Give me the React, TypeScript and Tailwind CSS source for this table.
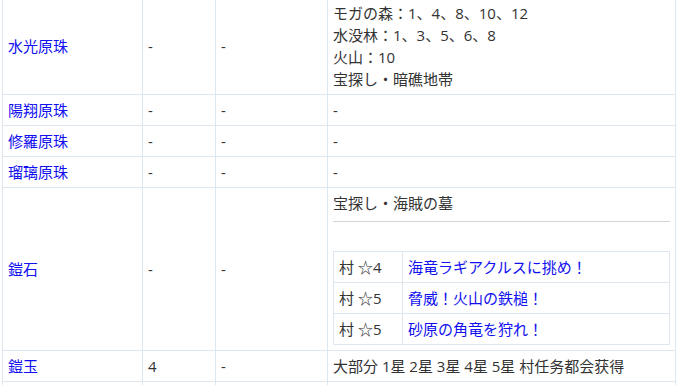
const LINK = "text-[#1010f0]";

type Quest = { rank: string; name: string };

const QUESTS: Quest[] = [
  { rank: "村 ☆4", name: "海竜ラギアクルスに挑め！" },
  { rank: "村 ☆5", name: "脅威！火山の鉄槌！" },
  { rank: "村 ☆5", name: "砂原の角竜を狩れ！" },
];

const td = "border border-[#dce7f2] px-[5px] py-[4px] align-middle";

function SimpleRow({ name, a, b, c }: { name: string; a: string; b: string; c: string }) {
  return (
    <tr>
      <td className={td}>
        <a className={LINK}>{name}</a>
      </td>
      <td className={td}>{a}</td>
      <td className={td}>{b}</td>
      <td className={td}>{c}</td>
    </tr>
  );
}

export default function App() {
  return (
    <div className="w-[680px] h-[385px] overflow-hidden bg-white">
      <table
        className="ml-[2px] -mt-[3px] w-[674px] border-collapse text-[15px] leading-[22px] text-[#333]"
        style={{ fontFamily: '"Open Sans", "Noto Sans CJK JP", sans-serif' }}
      >
        <colgroup>
          <col className="w-[140px]" />
          <col className="w-[73px]" />
          <col className="w-[112px]" />
          <col />
        </colgroup>
        <tbody>
          <tr>
            <td className={td}>
              <a className={LINK}>水光原珠</a>
            </td>
            <td className={td}>-</td>
            <td className={td}>-</td>
            <td className={td}>
              <div>モガの森：1、4、8、10、12</div>
              <div>水没林：1、3、5、6、8</div>
              <div>火山：10</div>
              <div>宝探し・暗礁地帯</div>
            </td>
          </tr>
          <SimpleRow name="陽翔原珠" a="-" b="-" c="-" />
          <SimpleRow name="修羅原珠" a="-" b="-" c="-" />
          <SimpleRow name="瑠璃原珠" a="-" b="-" c="-" />
          <tr>
            <td className={td}>
              <a className={LINK}>鎧石</a>
            </td>
            <td className={td}>-</td>
            <td className={td}>-</td>
            <td className={`${td} pb-[5px]`}>
              <div>宝探し・海賊の墓</div>
              <div className="mt-[7px] mb-[29px] h-px bg-[#d4d4d4]" />
              <table className="w-full border-collapse">
                <colgroup>
                  <col className="w-[69px]" />
                  <col />
                </colgroup>
                <tbody>
                  {QUESTS.map((q, i) => (
                    <tr key={i}>
                      <td className={td}>{q.rank}</td>
                      <td className={td}>
                        <a className={LINK}>{q.name}</a>
                      </td>
                    </tr>
                  ))}
                </tbody>
              </table>
            </td>
          </tr>
          <SimpleRow name="鎧玉" a="4" b="-" c="大部分 1星 2星 3星 4星 5星 村任务都会获得" />
          <tr>
            <td className={td}>&nbsp;</td>
            <td className={td}>&nbsp;</td>
            <td className={td}>&nbsp;</td>
            <td className={td}>&nbsp;</td>
          </tr>
        </tbody>
      </table>
    </div>
  );
}
